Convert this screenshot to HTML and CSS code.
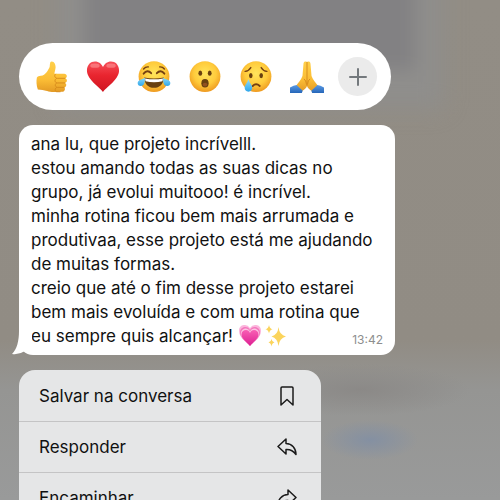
FILE: index.html
```html
<!DOCTYPE html>
<html lang="pt-BR">
<head>
<meta charset="utf-8">
<meta name="viewport" content="width=device-width, initial-scale=1">
<title>Conversa</title>
<link rel="stylesheet" href="styles.css">
</head>
<body>
<svg class="defs" aria-hidden="true">
  <defs>
    <radialGradient id="face" cx=".5" cy=".4" r=".6">
      <stop offset="0" stop-color="#ffe55c"/><stop offset=".6" stop-color="#ffcb3c"/><stop offset="1" stop-color="#ee9a20"/>
    </radialGradient>
    <linearGradient id="skin" x1="0" y1="0" x2="0" y2="1">
      <stop offset="0" stop-color="#ffd04a"/><stop offset=".6" stop-color="#fbbd35"/><stop offset="1" stop-color="#e39a25"/>
    </linearGradient>
    <linearGradient id="red" x1="0" y1="0" x2="0" y2="1">
      <stop offset="0" stop-color="#f6505a"/><stop offset=".45" stop-color="#e9252f"/><stop offset="1" stop-color="#cf1420"/>
    </linearGradient>
    <linearGradient id="tear" x1="0" y1="0" x2="0" y2="1">
      <stop offset="0" stop-color="#8fdcfb"/><stop offset="1" stop-color="#2fa6ea"/>
    </linearGradient>
    <linearGradient id="sleeve" x1="0" y1="0" x2="0" y2="1">
      <stop offset="0" stop-color="#5b9ae4"/><stop offset="1" stop-color="#2566b8"/>
    </linearGradient>
    <linearGradient id="pink" x1="0" y1="0" x2="0" y2="1">
      <stop offset="0" stop-color="#f95fb4"/><stop offset="1" stop-color="#dc1f92"/>
    </linearGradient>
  </defs>
</svg>

<main class="overlay">
  <div class="reactions" role="group" aria-label="Reações">
    <button class="reaction" type="button" aria-label="Curtir">
      <svg class="emoji" viewBox="0 0 36 36">
        <path fill="url(#skin)" d="M2 18.500C3 17 6 17 8 16.500C11 15.500 14 11 15.500 7.500C16 5 15.500 1.800 17.500 1.600C20.500 1.400 22 5 21.800 8C21.600 10.500 20.600 13 20.600 14.500L31 14.600C34.200 14.800 34.600 18.800 32 19.400C34.600 20.300 34.300 23.800 31.800 24.300C34 25.300 33.300 28.500 31 29C32.600 30.400 31.400 33.600 28.500 33.700L20 33.800C14 33.800 11 32 8 31.700L3 31.200C1.500 27 1.200 22 2 18.500Z"/>
        <path class="skin-line" d="M32 19.400H23.500C20.500 19 20.300 16 22 14.700M31.800 24.300H23.500C20.500 23.800 20.500 20.500 23 19.500M31 29H23.500C20.800 28.300 21 25 23 24.400M27 33.600H22.500C20.700 32.500 21.200 29.500 23 29"/>
      </svg>
    </button>
    <button class="reaction" type="button" aria-label="Amei">
      <svg class="emoji" viewBox="0 0 36 36">
        <path fill="url(#red)" d="M18 34C15.500 29 1 21 1 11C1 5 5 1.500 9.500 1.500C13.500 1.500 16.700 4 18 7.500C19.300 4 22.500 1.500 26.500 1.500C31 1.500 35 5 35 11C35 21 20.500 29 18 34Z"/>
        <ellipse class="shine" cx="9.500" cy="6" rx="5" ry="2.300"/><ellipse class="shine" cx="26.500" cy="6" rx="5" ry="2.300"/>
      </svg>
    </button>
    <button class="reaction" type="button" aria-label="Haha">
      <svg class="emoji" viewBox="0 0 36 36">
        <circle cx="18" cy="17.500" r="16.300" fill="url(#face)"/>
        <path class="brow" d="M7 9.500Q9 7 12 7.300M29 9.500Q27 7 24 7.300"/>
        <path class="feature-line" d="M7 14.500Q11 9.500 15 14M21 14Q25 9.500 29 14.500"/>
        <path class="mouth" d="M7.500 18.500Q18 20.500 28.500 18.500C28 25.500 24 29.500 18 29.500S8 25.500 7.500 18.500Z"/>
        <path class="teeth" d="M8.500 19.500Q18 21.500 27.500 19.500L27 22.500Q18 24.500 9 22.500Z"/>
        <path fill="url(#tear)" d="M8.500 18.500C8.500 24 7.500 27.500 4 27.500C.5 27.500-.5 23.500 2.500 21.500C5 20 7 20.500 8.500 18.500ZM27.500 18.500C27.500 24 28.500 27.500 32 27.500C35.500 27.500 36.500 23.500 33.500 21.500C31 20 29 20.500 27.500 18.500Z"/>
      </svg>
    </button>
    <button class="reaction" type="button" aria-label="Uau">
      <svg class="emoji" viewBox="0 0 36 36">
        <circle cx="18" cy="17.500" r="16.300" fill="url(#face)"/>
        <ellipse class="mouth" cx="13" cy="14" rx="2" ry="2.800"/><ellipse class="mouth" cx="23" cy="14" rx="2" ry="2.800"/>
        <ellipse class="mouth" cx="18" cy="24.500" rx="3.900" ry="4.500"/>
        <ellipse class="tongue" cx="18" cy="26" rx="2.400" ry="2"/>
      </svg>
    </button>
    <button class="reaction" type="button" aria-label="Triste">
      <svg class="emoji" viewBox="0 0 36 36">
        <circle cx="18" cy="17.500" r="16.300" fill="url(#face)"/>
        <path class="brow" d="M6.500 12Q10.500 11.500 12.500 8M29.500 12Q25.500 11.500 23.500 8"/>
        <ellipse class="mouth" cx="12.500" cy="16.500" rx="1.900" ry="2.700"/><ellipse class="mouth" cx="23.500" cy="16.500" rx="1.900" ry="2.700"/>
        <path class="feature-line" d="M14.500 27.500Q18 24 22 27.500"/>
        <path fill="url(#tear)" d="M10 20C11 24 14 26 14 29.500C14 32 12.500 33.500 10 33.500S6 32 6 29.500C6 26 9 24 10 20Z"/>
      </svg>
    </button>
    <button class="reaction" type="button" aria-label="Obrigado">
      <svg class="emoji" viewBox="0 0 36 36">
        <path fill="url(#skin)" d="M17.800 2C15 .5 14.300 2.500 14.200 5L13.200 17C12 21 8 25 6 28L11 33.500C15 32 17.500 30 18 27C18.500 30 21 32 25 33.500L30 28C28 25 24 21 22.800 17L21.800 5C21.700 2.500 21 .5 18.200 2Z"/>
        <path class="skin-line" d="M18 2V28M14.800 20Q17 21.500 17.500 26M21.200 20Q19 21.500 18.500 26"/>
        <path fill="url(#sleeve)" d="M0 29Q4 27 7 26.500Q10 29.500 13.500 32.500L12.500 35H0ZM36 29Q32 27 29 26.500Q26 29.500 22.500 32.500L23.500 35H36Z"/>
      </svg>
    </button>
    <button class="reaction more" type="button" aria-label="Mais reações">
      <svg class="plus" viewBox="0 0 18 18"><path d="M9 1V17M1 9H17"/></svg>
    </button>
  </div>

  <article class="bubble">
    <svg class="tail" viewBox="0 0 20 24" aria-hidden="true"><path d="M7 0C7 10 5 18 0 23Q7 24 13 20L20 20V0Z"/></svg>
    <p class="message">ana lu, que projeto incrívelll.<br>
      estou amando todas as suas dicas no grupo, já evolui muitooo! é incrível.<br>
      minha rotina ficou bem mais arrumada e produtivaa, esse projeto está me ajudando de muitas formas.<br>
      creio que até o fim desse projeto estarei bem mais evoluída e com uma rotina que eu sempre quis alcançar!
      <svg class="inline-emoji" viewBox="0 0 24 24" role="img" aria-label="Coração crescendo">
        <path fill="#fbb5dc" d="M12 22C9 18 1 14 1 7C1 2 4 1 7 1Q10 1 12 4Q14 1 17 1C20 1 23 2 23 7C23 14 15 18 12 22Z"/>
        <path fill="#f477bd" d="M12 22C9 18 2 14 2 8.500C2 4.500 5 3 7.500 3Q10.500 3 12 6Q13.500 3 16.500 3C19 3 22 4.500 22 8.500C22 14 15 18 12 22Z"/>
        <path fill="#fbc4e2" d="M12 22C9 18 3 14.500 3 9.500C3 6 5.500 4.500 8 4.500Q10.500 4.500 12 7.500Q13.500 4.500 16 4.500C18.500 4.500 21 6 21 9.500C21 14.500 15 18 12 22Z"/>
        <path fill="url(#pink)" d="M12 22C9 18 3.500 15 3.500 10.500C3.500 7.500 5.500 6 8 6Q11 6 12 9Q13 6 16 6C18.500 6 20.500 7.500 20.500 10.500C20.500 15 15 18 12 22Z"/>
      </svg><svg class="inline-emoji" viewBox="0 0 24 24" role="img" aria-label="Brilhos">
        <path fill="#fbd45c" d="M14.500 3Q15.300 11 22 12.500Q15.300 14 14.500 22Q13.700 14 7.500 12.500Q13.700 11 14.500 3ZM5 1Q5.500 4.500 8.500 5.200Q5.500 6 5 9.500Q4.500 6 1.500 5.200Q4.500 4.500 5 1ZM7.500 15Q8 18 10.500 18.500Q8 19 7.500 22.500Q7 19 4.500 18.500Q7 18 7.500 15Z"/>
      </svg><time class="time" datetime="13:42">13:42</time></p>
  </article>

  <div class="menu" role="group" aria-label="Opções da mensagem">
    <button class="menu-item" type="button">Salvar na conversa
      <svg class="icon" viewBox="0 0 20 20"><path d="M5 1H15Q16 1 16 2V19L10 13.500L4 19V2Q4 1 5 1Z"/></svg>
    </button>
    <button class="menu-item" type="button">Responder
      <svg class="icon" viewBox="0 0 20 20"><path d="M9 2L1 9.500L9 17V12.500C13.500 12.200 16.500 14 19 17.500C19 11 15 6.800 9 6.500Z"/></svg>
    </button>
    <button class="menu-item" type="button">Encaminhar
      <svg class="icon" viewBox="0 0 20 20"><path d="M11 2L19 9.500L11 17V12.500C6.500 12.200 3.500 14 1 17.500C1 11 5 6.800 11 6.500Z"/></svg>
    </button>
  </div>
</main>
</body>
</html>
```
FILE: styles.css
```css
* {
  box-sizing: border-box;
}

body {
  position: relative;
  margin: 0;
  height: 100vh;
  overflow: hidden;
  font-family: Inter, "Liberation Sans", sans-serif;
  font-size: 17px;
  line-height: 24px;
  color: #111;
  background:
    radial-gradient(ellipse 48px 20px at 74% 88%, #8490a2 0%, #8490a200 100%),
    radial-gradient(ellipse 110px 26px at 72% 78%, #8b8987 0%, #8b898700 100%),
    linear-gradient(#928d85 0%, #918c84 68%, #959593 78%, #999a9a 100%);
}

/* Out-of-focus message bubble behind the overlay */
body::before {
  content: "";
  position: absolute;
  top: -40px;
  left: 17%;
  width: 66%;
  height: 110px;
  background: #828183;
  box-shadow: 0 10px 10px 28px #8f8e8c;
  filter: blur(9px);
}

button {
  font: inherit;
  color: inherit;
  border: 0;
  background: none;
  cursor: pointer;
}

.defs {
  position: absolute;
  width: 0;
  height: 0;
}

.overlay {
  position: relative;
  display: flex;
  flex-direction: column;
  align-items: flex-start;
  gap: 15px;
  padding: 43px 19px 0;
}

.reactions {
  display: grid;
  grid-template-columns: repeat(7, 1fr);
  align-items: center;
  justify-items: center;
  width: 100%;
  max-width: 372px;
  padding: 14px 8px;
  border-radius: 34px;
  background: #fff;
}

.reaction {
  display: flex;
  align-items: center;
  justify-content: center;
  width: 39px;
  height: 39px;
  padding: 0;
  border-radius: 50%;
}

.emoji {
  width: 34px;
  height: 34px;
}

.more {
  background: #ebebeb;
}

.plus {
  width: 18px;
  height: 18px;
  fill: none;
  stroke: #74797d;
  stroke-width: 2;
  stroke-linecap: round;
}

.skin-line {
  fill: none;
  stroke: #d68a1c;
  stroke-width: 1;
}

.shine {
  fill: #ff9a9d;
  opacity: 0.55;
}

.brow,
.feature-line {
  fill: none;
  stroke: #754012;
  stroke-width: 1.5;
  stroke-linecap: round;
}

.feature-line {
  stroke-width: 2;
}

.mouth {
  fill: #69400f;
}

.teeth {
  fill: #fff;
}

.tongue {
  fill: #925020;
}

.bubble {
  position: relative;
  width: 100%;
  max-width: 376px;
  padding: 7px 12px;
  border-radius: 14px;
  background: #fff;
}

.message {
  margin: 0;
  padding-right: 4px;
}

.inline-emoji {
  width: 24px;
  height: 24px;
  margin-right: 2px;
  vertical-align: top;
}

.time {
  float: right;
  margin-top: 8px;
  margin-right: -4px;
  font-size: 12px;
  line-height: 16px;
  color: #8e8e8e;
}

.tail {
  position: absolute;
  left: -7px;
  bottom: 0;
  width: 20px;
  height: 24px;
  fill: #fff;
}

.menu {
  width: 100%;
  max-width: 302px;
  overflow: hidden;
  border-radius: 16px;
  background: #e5e6e7;
}

.menu-item {
  display: flex;
  align-items: center;
  justify-content: space-between;
  width: 100%;
  height: 51px;
  padding: 0 24px 0 20px;
  text-align: left;
}

.menu-item + .menu-item {
  border-top: 1px solid #c4c4c5;
}

.icon {
  width: 20px;
  height: 20px;
  fill: none;
  stroke: #1b1b1b;
  stroke-width: 1.5;
  stroke-linejoin: round;
}
```
